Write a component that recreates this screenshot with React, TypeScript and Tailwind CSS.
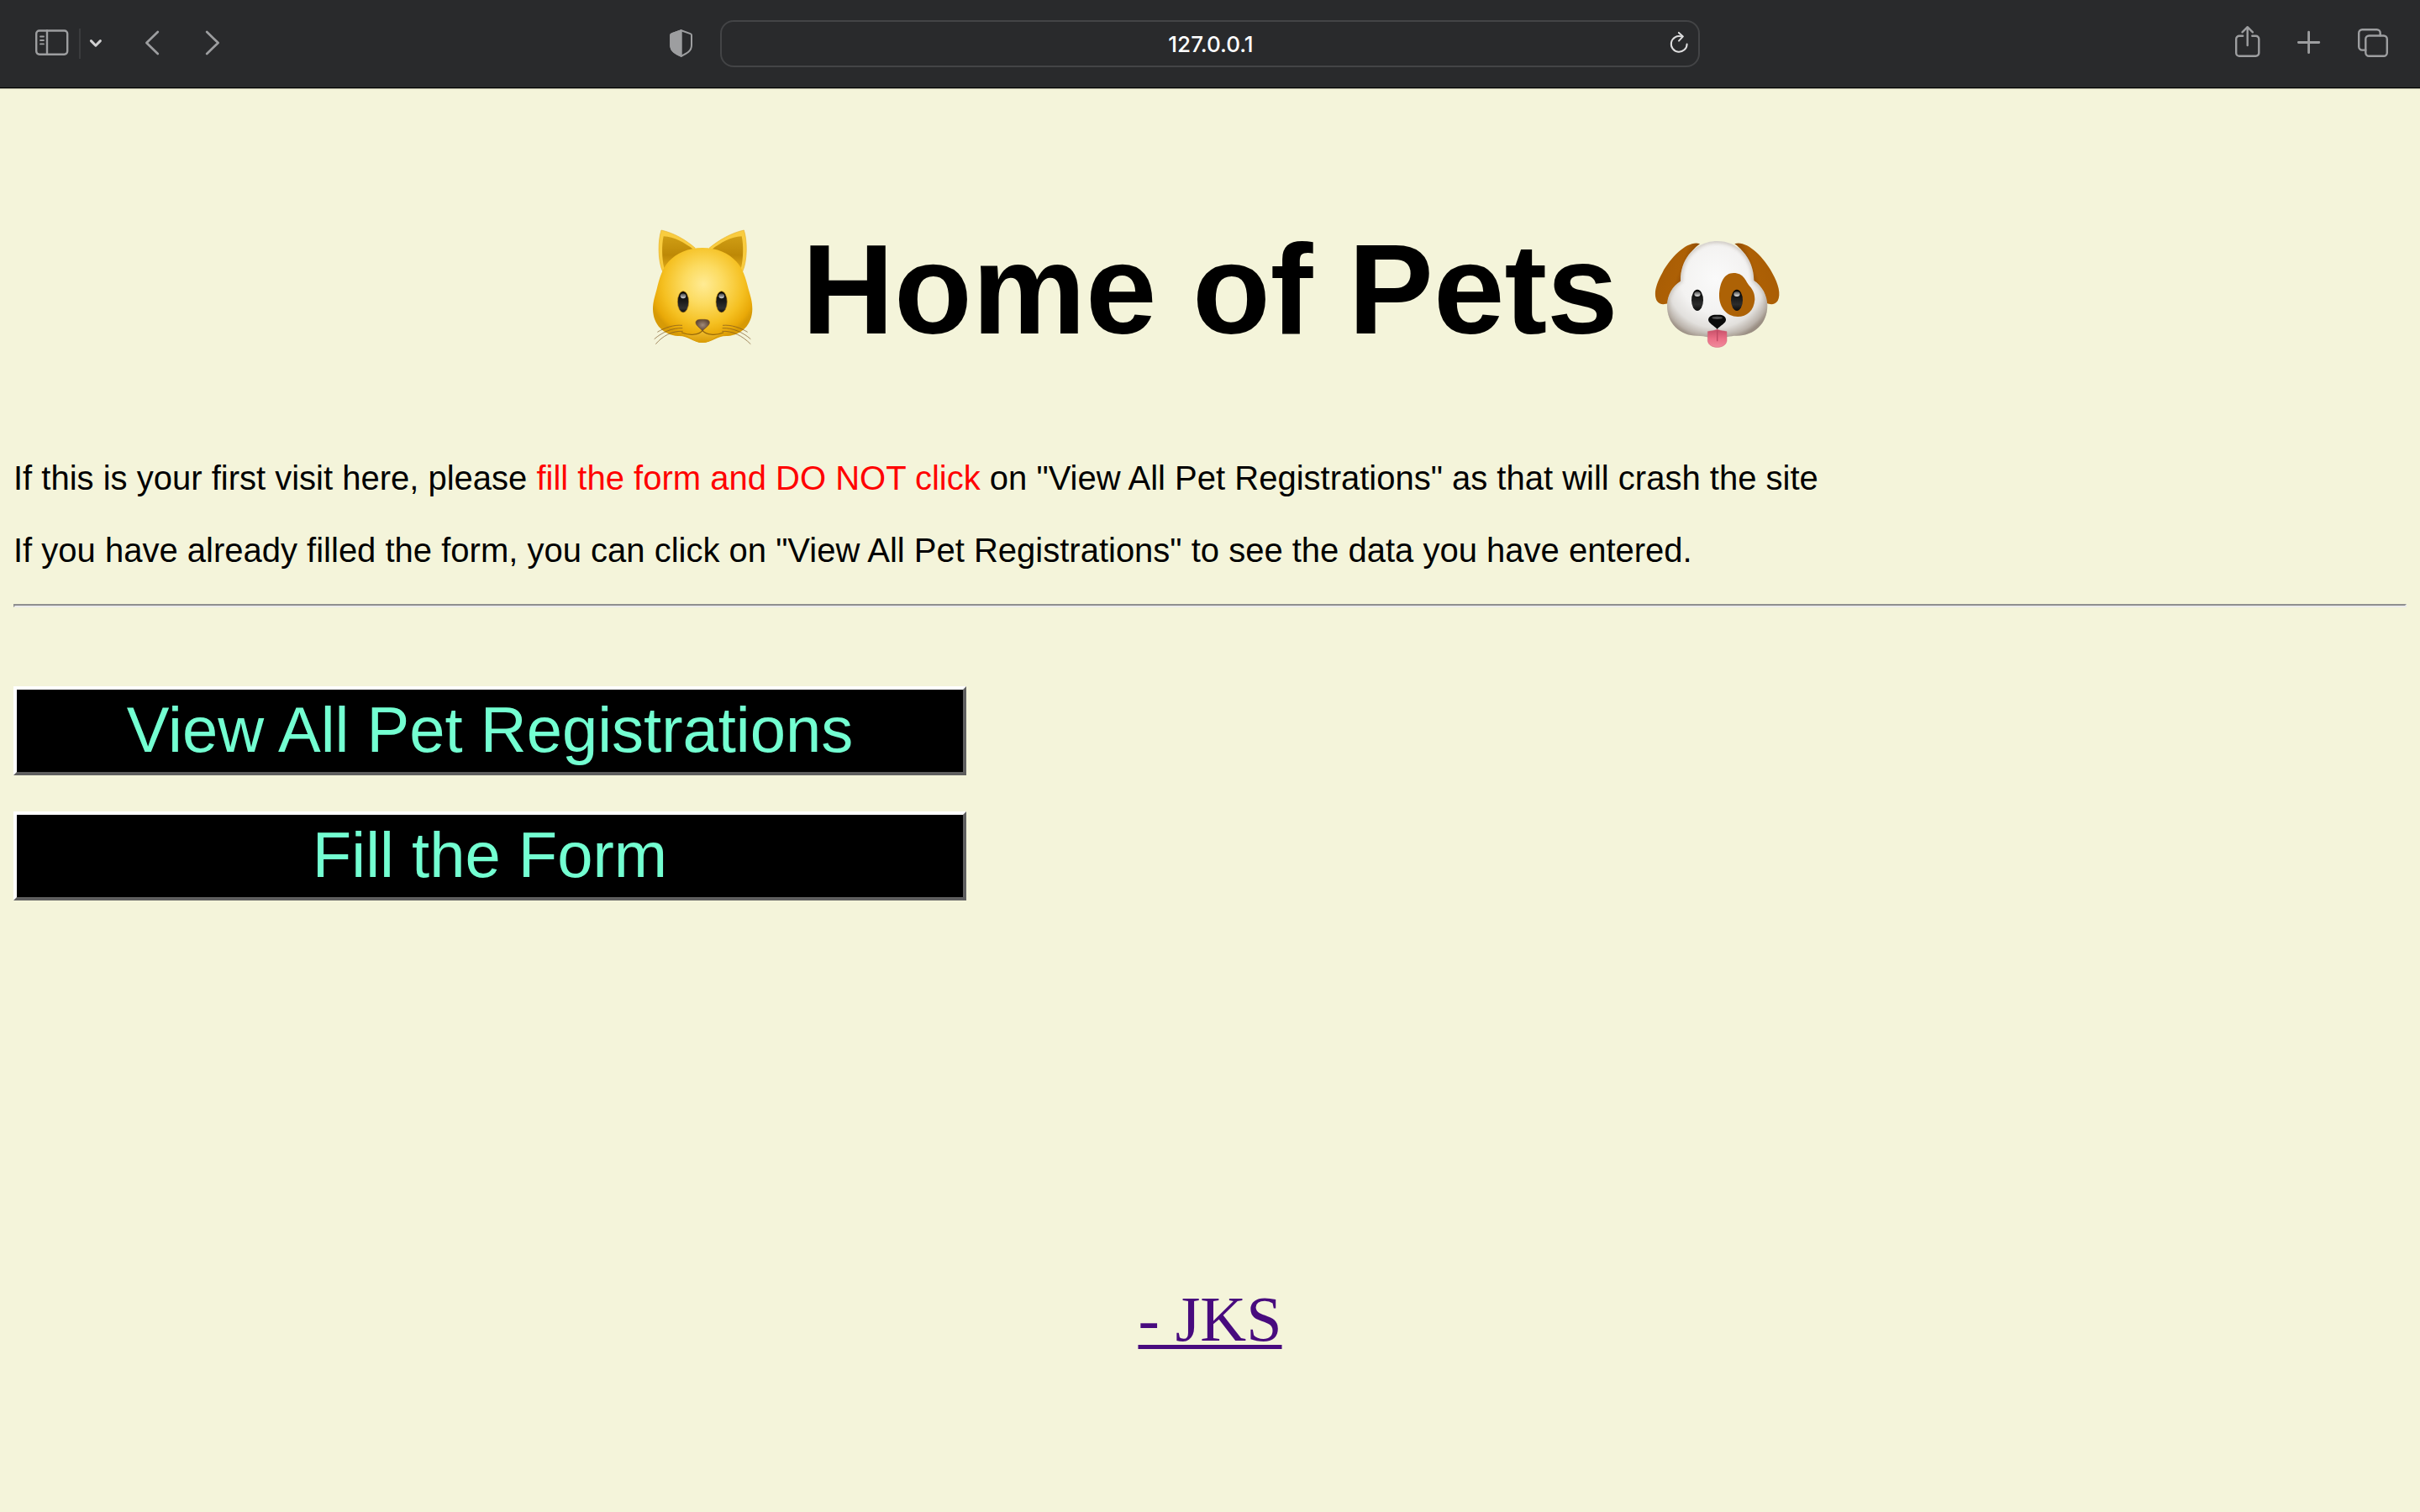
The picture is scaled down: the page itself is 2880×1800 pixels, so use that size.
import type { ReactNode } from "react";

type IconProps = { children: ReactNode; width: string; viewBox: string; stroke?: number };

function Icon({ children, width, viewBox, stroke = 2.4 }: IconProps) {
  return (
    <svg
      aria-hidden="true"
      className={`block h-11 ${width}`}
      viewBox={viewBox}
      fill="none"
      stroke="currentColor"
      strokeWidth={stroke}
      strokeLinecap="round"
      strokeLinejoin="round"
    >
      {children}
    </svg>
  );
}

function BrowserBar() {
  return (
    <header className="grid h-[106px] grid-cols-[1fr_minmax(0,1166px)_1fr] items-center border-b border-[#a3a392] bg-[#292a2c] pb-px text-[#9d9ea0] shadow-[inset_0_-1px_0_#000]">
      <div className="flex items-center pl-[42px] pr-8">
        <button aria-label="Show sidebar">
          <Icon width="w-10" viewBox="0 0 40 44">
            <rect x="1.2" y="6.5" width="37" height="28.2" rx="3.6" />
            <path d="M14 6.5v28.2" />
            <path d="M6 13.5h4M6 18h4M6 22.4h4" strokeWidth="1.8" />
          </Icon>
        </button>
        <span className="ml-3 mr-2.5 h-9 w-0.5 bg-[#3b3c3e]" />
        <button aria-label="Tab groups" className="text-[#d0d0d1]">
          <Icon width="w-4" viewBox="0 0 16 44" stroke={3}>
            <path d="M2.4 18.6l5.5 5.6 5.5-5.6" />
          </Icon>
        </button>
        <button aria-label="Back" className="ml-[50px]">
          <Icon width="w-[18px]" viewBox="0 0 18 44" stroke={2.7}>
            <path d="M15.8 8L2.4 21l13.4 13" />
          </Icon>
        </button>
        <button aria-label="Forward" className="ml-[54px]">
          <Icon width="w-[18px]" viewBox="0 0 18 44" stroke={2.7}>
            <path d="M2.2 8l13.4 13L2.2 34" />
          </Icon>
        </button>
        <button aria-label="Privacy report" className="ml-auto">
          <Icon width="w-7" viewBox="0 0 28 44" stroke={2}>
            <path d="M13.7 6.2L2.6 10.1a2 2 0 0 0-1.4 1.9v12c0 7 6.6 9.9 12.5 12.8 5.9-2.9 12.3-5.8 12.3-12.8V12a2 2 0 0 0-1.4-1.9z" />
            <path d="M13.7 6.2L2.6 10.1a2 2 0 0 0-1.4 1.9v12c0 7 6.6 9.9 12.5 12.8z" fill="currentColor" />
          </Icon>
        </button>
      </div>
      <div className="relative">
        <input
          aria-label="Address"
          defaultValue="127.0.0.1"
          className="block h-14 w-full rounded-2xl border-2 border-[#434446] bg-transparent pl-0.5 text-center font-['Inter',sans-serif] text-[26px] font-medium text-white"
        />
        <button aria-label="Reload" className="absolute right-3 top-1.5 text-[#dededf]">
          <Icon width="w-6" viewBox="0 0 24 44" stroke={2}>
            <path d="M14 13.4a9.4 9.4 0 1 0 6.6 9" />
            <path d="M10.9 8.9l5 4.500-4.900 5.200" />
          </Icon>
        </button>
      </div>
      <div className="flex items-center justify-end gap-11 pr-[38px]">
        <button aria-label="Share">
          <Icon width="w-[30px]" viewBox="0 0 30 44">
            <path d="M9.2 12.7H5a3.8 3.8 0 0 0-3.8 3.8V33A3.8 3.8 0 0 0 5 36.8h19.5a3.8 3.8 0 0 0 3.8-3.8V16.5a3.8 3.8 0 0 0-3.8-3.8h-4.2" />
            <path d="M14.7 24V2.5M8.5 8.3l6.2-6.1 6.2 6.1" />
          </Icon>
        </button>
        <button aria-label="New tab">
          <Icon width="w-7" viewBox="0 0 28 44" stroke={2.8}>
            <path d="M13.6 8.2v24.5M1.4 20.5h24.4" />
          </Icon>
        </button>
        <button aria-label="Tab overview">
          <Icon width="w-9" viewBox="0 0 36 44">
            <rect x="9.3" y="12.5" width="25.5" height="24.3" rx="4" />
            <path d="M9.3 29.6H5.2a4 4 0 0 1-4-4V9.3a4 4 0 0 1 4-4h17.5a4 4 0 0 1 4 4v3" />
          </Icon>
        </button>
      </div>
    </header>
  );
}

function CatFace() {
  return (
    <svg role="img" aria-label="cat" className="size-[152px] shrink-0" viewBox="30 54 456 456">
      <defs>
        <radialGradient id="catFur" gradientUnits="userSpaceOnUse" cx="262" cy="265" r="200">
          <stop offset="0" stopColor="#ffeb94" />
          <stop offset="0.35" stopColor="#fcdb60" />
          <stop offset="0.72" stopColor="#f5c021" />
          <stop offset="0.92" stopColor="#e9a908" />
          <stop offset="1" stopColor="#d79a06" />
        </radialGradient>
        <linearGradient id="catEar" x1="0" y1="0" x2="0" y2="1">
          <stop offset="0" stopColor="#cf9d14" />
          <stop offset="0.6" stopColor="#bd8806" />
          <stop offset="1" stopColor="#dba516" />
        </linearGradient>
        <linearGradient id="catEye" x1="0" y1="0" x2="0" y2="1">
          <stop offset="0" stopColor="#000" />
          <stop offset="0.5" stopColor="#1c1c1c" />
          <stop offset="0.8" stopColor="#303030" />
          <stop offset="1" stopColor="#0c0c0c" />
        </linearGradient>
        <linearGradient id="catShine" x1="0" y1="0" x2="0" y2="1">
          <stop offset="0" stopColor="#444" />
          <stop offset="1" stopColor="#d5d5d5" />
        </linearGradient>
        <radialGradient id="catNose">
          <stop offset="0" stopColor="#a28a78" />
          <stop offset="1" stopColor="#604838" />
        </radialGradient>
        <linearGradient id="catChin" x1="0" y1="0" x2="0" y2="1">
          <stop offset="0" stopColor="#f3c033" />
          <stop offset="1" stopColor="#d99b05" />
        </linearGradient>
      </defs>
      <path d="M111 72C99 108 98 180 116 220L232 136C200 108 157 82 111 72zM406 72C418 108 419 180 401 220L282 136C316 108 360 82 406 72z" fill="#f9cc3f" stroke="#e7b22c" strokeWidth="2" />
      <path d="M119 94C112 125 113 173 121 207L225 140C195 118 157 95 119 94zM398 94C405 125 404 173 396 207L292 140C322 118 360 95 398 94z" fill="url(#catEar)" />
      <path d="M258 135C310 135 352 155 378 183C402 209 412 240 422 282C431 311 436 329 436 354C435 411 398 446 348 450C310 448 293 474 258 474C224 474 207 448 170 450C120 446 82 411 81 354C81 329 87 311 95 282C105 240 115 209 138 183C165 155 207 135 258 135z" fill="url(#catFur)" />
      <path d="M185 440C215 448 245 443 258 429C273 443 303 448 333 440C300 447 294 473 258 474C225 473 216 450 185 440z" fill="url(#catChin)" />
      <path d="M185 438C213 450 246 446 258 430C271 446 304 450 332 438" fill="none" stroke="#976909" strokeWidth="4" strokeLinecap="round" />
      {[189, 326].map((x) => (
        <g key={x}>
          <ellipse cx={x} cy="328" rx="20" ry="38" fill="url(#catEye)" stroke="#c18d14" strokeWidth="2" />
          <ellipse cx={x} cy="307" rx="10" ry="9" fill="url(#catShine)" />
        </g>
      ))}
      <path d="M234 401C236 391 246 391 258 391C271 391 282 391 283 401C284 412 269 420 258 431C248 420 233 412 234 401z" fill="url(#catNose)" stroke="#785323" strokeWidth="2" />
      <g fill="none" stroke="#785323" strokeWidth="2.5" opacity="0.8">
        <path d="M186 412C155 409 122 421 97 436M187 422C151 420 113 437 86 461M188 433C150 431 115 450 91 479" />
        <path d="M330 412C361 409 394 421 419 436M329 422C365 420 403 437 430 461M328 433C366 431 401 450 430 479" />
      </g>
    </svg>
  );
}

const dogHead =
  "M281 81C353 81 411 137 412 222C440 240 460 275 460 312C459 376 414 419 350 419C325 419 310 427 281 427C252 427 235 419 210 419C146 419 102 374 102 312C102 275 121 241 150 224C149 137 209 81 281 81z";

function DogFace() {
  return (
    <svg role="img" aria-label="dog" className="size-[152px] shrink-0" viewBox="54 24 456 456">
      <defs>
        <radialGradient id="dogFur" gradientUnits="userSpaceOnUse" cx="275" cy="215" r="225">
          <stop offset="0" stopColor="#fafafa" />
          <stop offset="0.55" stopColor="#f3f2f1" />
          <stop offset="0.78" stopColor="#e2e0dd" />
          <stop offset="0.93" stopColor="#bab2aa" />
          <stop offset="1" stopColor="#978b80" />
        </radialGradient>
        <linearGradient id="dogEarLeft" x1="0" y1="0" x2="1" y2="0.5">
          <stop offset="0" stopColor="#a65b05" />
          <stop offset="0.6" stopColor="#ad6005" />
          <stop offset="1" stopColor="#6c3400" />
        </linearGradient>
        <linearGradient id="dogEarRight" x1="1" y1="0" x2="0" y2="0.5">
          <stop offset="0" stopColor="#a65b05" />
          <stop offset="0.6" stopColor="#ad6005" />
          <stop offset="1" stopColor="#6c3400" />
        </linearGradient>
        <linearGradient id="dogTongue" x1="0" y1="0" x2="0" y2="1">
          <stop offset="0" stopColor="#c64f68" />
          <stop offset="0.5" stopColor="#ea6d85" />
          <stop offset="1" stopColor="#f08a9c" />
        </linearGradient>
        <linearGradient id="dogEye" x1="0" y1="0" x2="0" y2="1">
          <stop offset="0" stopColor="#000" />
          <stop offset="0.7" stopColor="#2c2c2c" />
          <stop offset="1" stopColor="#0c0c0c" />
        </linearGradient>
        <linearGradient id="dogShine" x1="0" y1="0" x2="0" y2="1">
          <stop offset="0" stopColor="#444" />
          <stop offset="1" stopColor="#e8e8e8" />
        </linearGradient>
        <filter id="dogSoft" x="-20%" y="-20%" width="140%" height="140%">
          <feGaussianBlur stdDeviation="7" />
        </filter>
        <clipPath id="dogHead">
          <path d={dogHead} />
        </clipPath>
      </defs>
      <path d="M219 91C180 77 119 131 85 194C62 235 53 270 65 294C76 310 91 308 108 303L154 228C153 172 179 119 219 91z" fill="url(#dogEarLeft)" />
      <path d="M343 91C382 77 443 131 477 194C500 235 509 270 497 294C486 310 471 308 456 303L408 228C409 172 383 119 343 91z" fill="url(#dogEarRight)" />
      <path d={dogHead} fill="url(#dogFur)" />
      <g clipPath="url(#dogHead)">
        <path d={dogHead} fill="none" stroke="#a69b8e" strokeWidth="10" opacity="0.6" filter="url(#dogSoft)" />
      </g>
      <path d="M339 195C377 195 381 224 397 242C410 257 415 270 415 290C412 329 387 351 354 351C315 351 288 318 288 277C289 228 307 195 339 195z" fill="#ad6206" />
      {[210, 351].map((x) => (
        <g key={x}>
          <ellipse cx={x} cy="292" rx="21" ry="38" fill="url(#dogEye)" />
          <ellipse cx={x} cy="270" rx="11" ry="9" fill="url(#dogShine)" />
        </g>
      ))}
      <path d="M247 404C257 402 271 401 281 397C291 401 304 402 315 404V437C311 468 251 468 247 437z" fill="url(#dogTongue)" stroke="#cf6477" strokeWidth="1.5" />
      <path d="M281 400V437" stroke="#bd4963" strokeWidth="4" strokeLinecap="round" />
      <path d="M249 361C252 344 269 344 281 344C294 344 310 344 312 361C313 375 291 383 281 396C270 383 249 375 249 361z" fill="#0a0a0a" />
      <ellipse cx="281" cy="355" rx="19" ry="5" fill="#707070" opacity="0.7" />
    </svg>
  );
}

function PetButton({ children }: { children: ReactNode }) {
  return (
    <button className="w-[1134px] max-w-full border-4 border-b-[#5f5f5f] border-l-white border-r-[#5f5f5f] border-t-white bg-black pb-1.5 pt-1 text-[76px] leading-[88px] text-[#73ffd1]">
      {children}
    </button>
  );
}

export default function App() {
  return (
    <div className="min-h-screen bg-[#f4f4da] font-['Liberation_Sans',Arial,sans-serif] text-black">
      <BrowserBar />
      <main className="flex flex-col px-4 pt-[150px]">
        <h1 className="flex items-center justify-center gap-[42px] text-[152px] font-bold leading-[176px]">
          <CatFace />
          <span>Home of Pets</span>
          <DogFace />
        </h1>
        <div className="mt-[114px] flex flex-col gap-10 text-[40px] leading-[46px]">
          <p>
            If this is your first visit here, please{" "}
            <span className="text-[#ff0000]">fill the form and DO NOT click</span> on "View All Pet Registrations" as
            that will crash the site
          </p>
          <p>
            If you have already filled the form, you can click on "View All Pet Registrations" to see the data you have
            entered.
          </p>
        </div>
        <hr className="mt-[41px] h-1 border-2 border-b-[#ebebeb] border-l-[#8f8f8f] border-r-[#ebebeb] border-t-[#8f8f8f]" />
        <div className="mt-[94px] flex flex-col items-start gap-[43px]">
          <PetButton>View All Pet Registrations</PetButton>
          <PetButton>Fill the Form</PetButton>
        </div>
        <a
          href="#jks"
          className="mt-[454px] self-center font-['Liberation_Serif','Times_New_Roman',serif] text-[76px] leading-[88px] text-[#480b7e] underline decoration-[5px] underline-offset-[5px]"
        >
          - JKS
        </a>
      </main>
    </div>
  );
}
